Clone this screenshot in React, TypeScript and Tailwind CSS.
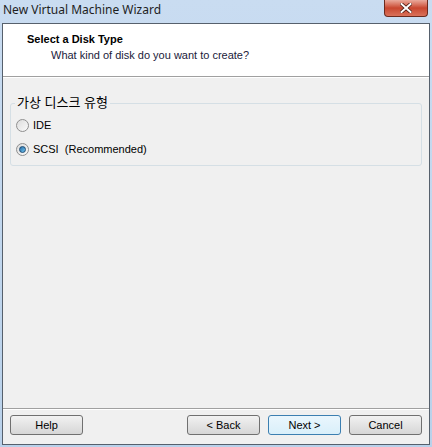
import { useState } from 'react';

const ui = { fontFamily: '"Liberation Sans", "Noto Sans CJK KR", sans-serif' };

function Radio({ checked, onClick }: { checked: boolean; onClick: () => void }) {
  return (
    <span
      onClick={onClick}
      className="flex h-[13px] w-[13px] items-center justify-center rounded-full border border-[#8f8f8f] bg-gradient-to-br from-[#dcdcdc] to-[#fbfbfb]"
    >
      {checked && (
        <span className="h-[7px] w-[7px] rounded-full border border-[#1c4a72] bg-gradient-to-br from-[#2a6fa8] to-[#6ec4f0]" />
      )}
    </span>
  );
}

function WizButton({ label, focused }: { label: string; focused?: boolean }) {
  return (
    <button
      className={
        'h-[20px] w-[73px] rounded-[3px] border text-[11px] text-black ' +
        (focused
          ? 'border-[#3c7fb1] bg-gradient-to-b from-[#eaf6fd] to-[#d9effa]'
          : 'border-[#707070] bg-gradient-to-b from-[#f2f2f2] to-[#d6d6d6]')
      }
      style={ui}
    >
      {label}
    </button>
  );
}

export default function App() {
  const [disk, setDisk] = useState<'ide' | 'scsi'>('scsi');

  return (
    <div className="flex h-[447px] w-[432px] flex-col bg-gradient-to-b from-[#c9dcf1] to-[#b9d1ea] px-[2px] pb-[2px]">
      {/* title bar */}
      <div className="flex h-[23px] items-start justify-between">
        <span className="pl-px pt-[1px] text-[12px] text-[#1e1e1e]" style={{ fontFamily: '"Noto Sans", sans-serif' }}>
          New Virtual Machine Wizard
        </span>
        <span className="mr-[2px] flex h-[17px] w-[44px] items-center justify-center rounded-b-[4px] border border-t-0 border-[#6b2a1e] bg-gradient-to-b from-[#e9a99c] via-[#c8462f] to-[#d9715a]">
          <svg width="12" height="10" viewBox="0 0 12 10">
            <path d="M1.5 1 L10.5 9 M10.5 1 L1.5 9" stroke="#4a1a12" strokeWidth="3.6" strokeLinecap="square" />
            <path d="M1.5 1 L10.5 9 M10.5 1 L1.5 9" stroke="#ffffff" strokeWidth="2" strokeLinecap="square" />
          </svg>
        </span>
      </div>

      {/* client area */}
      <div className="flex flex-1 flex-col border border-[#56606c] bg-[#f0f0f0]" style={ui}>
        <div className="h-[53px] border-b border-[#a0a0a0] bg-white pl-[24px] pt-[8px]">
          <div className="text-[11px] font-bold leading-[14px] text-black">Select a Disk Type</div>
          <div className="pl-[24px] pt-[2px] text-[11px] leading-[14px] text-[#1a1a3a]">
            What kind of disk do you want to create?
          </div>
        </div>
        <div className="h-px bg-white" />

        <div className="flex-1 px-[7px] pt-[25px]">
          <div className="relative h-[63px] w-[412px] rounded-[3px] border border-[#d5dfe5]">
            <span className="absolute -top-[10px] left-[4px] bg-[#f0f0f0] px-[2px] text-[13px] leading-[18px] text-black">
              가상 디스크 유형
            </span>
            <div className="flex flex-col gap-[11px] pl-[5px] pt-[15px] text-[11px] leading-[13px] text-black">
              <label className="flex items-center gap-[4px]" onClick={() => setDisk('ide')}>
                <Radio checked={disk === 'ide'} onClick={() => setDisk('ide')} />
                <span>IDE</span>
              </label>
              <label className="flex items-center gap-[4px]" onClick={() => setDisk('scsi')}>
                <Radio checked={disk === 'scsi'} onClick={() => setDisk('scsi')} />
                <span>SCSI&nbsp;&nbsp;(Recommended)</span>
              </label>
            </div>
          </div>
        </div>

        <div className="mx-0 h-px bg-[#a0a0a0]" />
        <div className="h-px bg-white" />
        <div className="flex h-[34px] items-center justify-between px-[7px] pb-[4px]">
          <WizButton label="Help" />
          <div className="flex gap-[8px]">
            <WizButton label="< Back" />
            <WizButton label="Next >" focused />
            <WizButton label="Cancel" />
          </div>
        </div>
      </div>
    </div>
  );
}
